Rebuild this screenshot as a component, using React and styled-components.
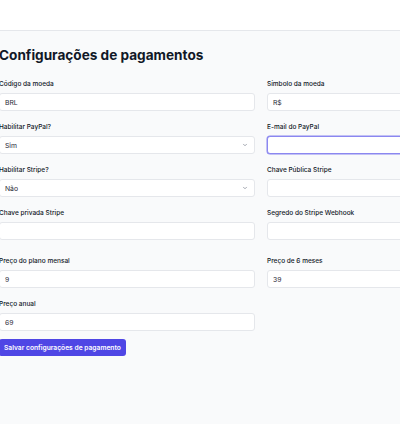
import React from "react";
import styled, { createGlobalStyle } from "styled-components";

const GlobalStyle = createGlobalStyle`
  html, body {
    margin: 0;
    padding: 0;
    background: #f9fafb;
    font-family: Inter, "Noto Sans", sans-serif;
    color: #111827;
  }
  * {
    box-sizing: border-box;
  }
`;

const TopBar = styled.header`
  height: 31px;
  background: #ffffff;
  border-bottom: 1px solid #e5e7eb;
`;

const Main = styled.main`
  width: 524px;
  margin-left: -1px;
  padding-top: 14px;
`;

const Title = styled.h1`
  margin: 0 0 13px;
  font-size: 13.6px;
  line-height: 20px;
  font-weight: 700;
`;

const Grid = styled.div`
  display: grid;
  grid-template-columns: 1fr 1fr;
  column-gap: 12px;
  row-gap: 10px;
  margin-top: ${(p) => p.$top || 0}px;
`;

const Field = styled.div`
  display: flex;
  flex-direction: column;
`;

const Label = styled.label`
  font-size: 6.5px;
  line-height: 12px;
  font-weight: 500;
  color: #111827;
  margin-bottom: 3px;
`;

const Input = styled.input`
  height: 18px;
  padding: 0 5px;
  font-family: inherit;
  font-size: 6.8px;
  color: #1f2937;
  background: #ffffff;
  border: 1px solid ${(p) => (p.$focus ? "#8b87f0" : "#e5e7eb")};
  box-shadow: ${(p) => (p.$focus ? "0 0 0 0.5px #8b87f0" : "none")};
  border-radius: 3px;
  outline: none;
`;

const SelectWrap = styled.div`
  position: relative;
  display: flex;
`;

const Select = styled.select`
  flex: 1;
  height: 18px;
  padding: 0 5px;
  font-family: inherit;
  font-size: 6.8px;
  color: #1f2937;
  background: #ffffff;
  border: 1px solid #e5e7eb;
  border-radius: 3px;
  appearance: none;
  outline: none;
`;

const Chevron = styled.svg`
  position: absolute;
  right: 7px;
  top: 6px;
  width: 6px;
  height: 6px;
  pointer-events: none;
`;

const Button = styled.button`
  margin-top: 8px;
  height: 17px;
  padding: 0 5px;
  border: none;
  border-radius: 3px;
  background: #4f46e5;
  color: #ffffff;
  font-family: inherit;
  font-size: 6.7px;
  font-weight: 600;
`;

const TextField = ({ label, value, focus }) => (
  <Field>
    <Label>{label}</Label>
    <Input defaultValue={value} $focus={focus} />
  </Field>
);

const SelectField = ({ label, value }) => (
  <Field>
    <Label>{label}</Label>
    <SelectWrap>
      <Select defaultValue={value}>
        <option value="Sim">Sim</option>
        <option value="Não">Não</option>
      </Select>
      <Chevron viewBox="0 0 24 24" fill="none" stroke="#6b7280" strokeWidth="2.5" strokeLinecap="round" strokeLinejoin="round">
        <path d="M6 9l6 6 6-6" />
      </Chevron>
    </SelectWrap>
  </Field>
);

export default function App() {
  return (
    <>
      <GlobalStyle />
      <TopBar />
      <Main>
        <Title>Configurações de pagamentos</Title>
        <Grid>
          <TextField label="Código da moeda" value="BRL" />
          <TextField label="Símbolo da moeda" value="R$" />
          <SelectField label="Habilitar PayPal?" value="Sim" />
          <TextField label="E-mail do PayPal" value="" focus />
          <SelectField label="Habilitar Stripe?" value="Não" />
          <TextField label="Chave Pública Stripe" value="" />
          <TextField label="Chave privada Stripe" value="" />
          <TextField label="Segredo do Stripe Webhook" value="" />
        </Grid>
        <Grid $top={15}>
          <TextField label="Preço do plano mensal" value="9" />
          <TextField label="Preço de 6 meses" value="39" />
          <TextField label="Preço anual" value="69" />
        </Grid>
        <Button>Salvar configurações de pagamento</Button>
      </Main>
    </>
  );
}
